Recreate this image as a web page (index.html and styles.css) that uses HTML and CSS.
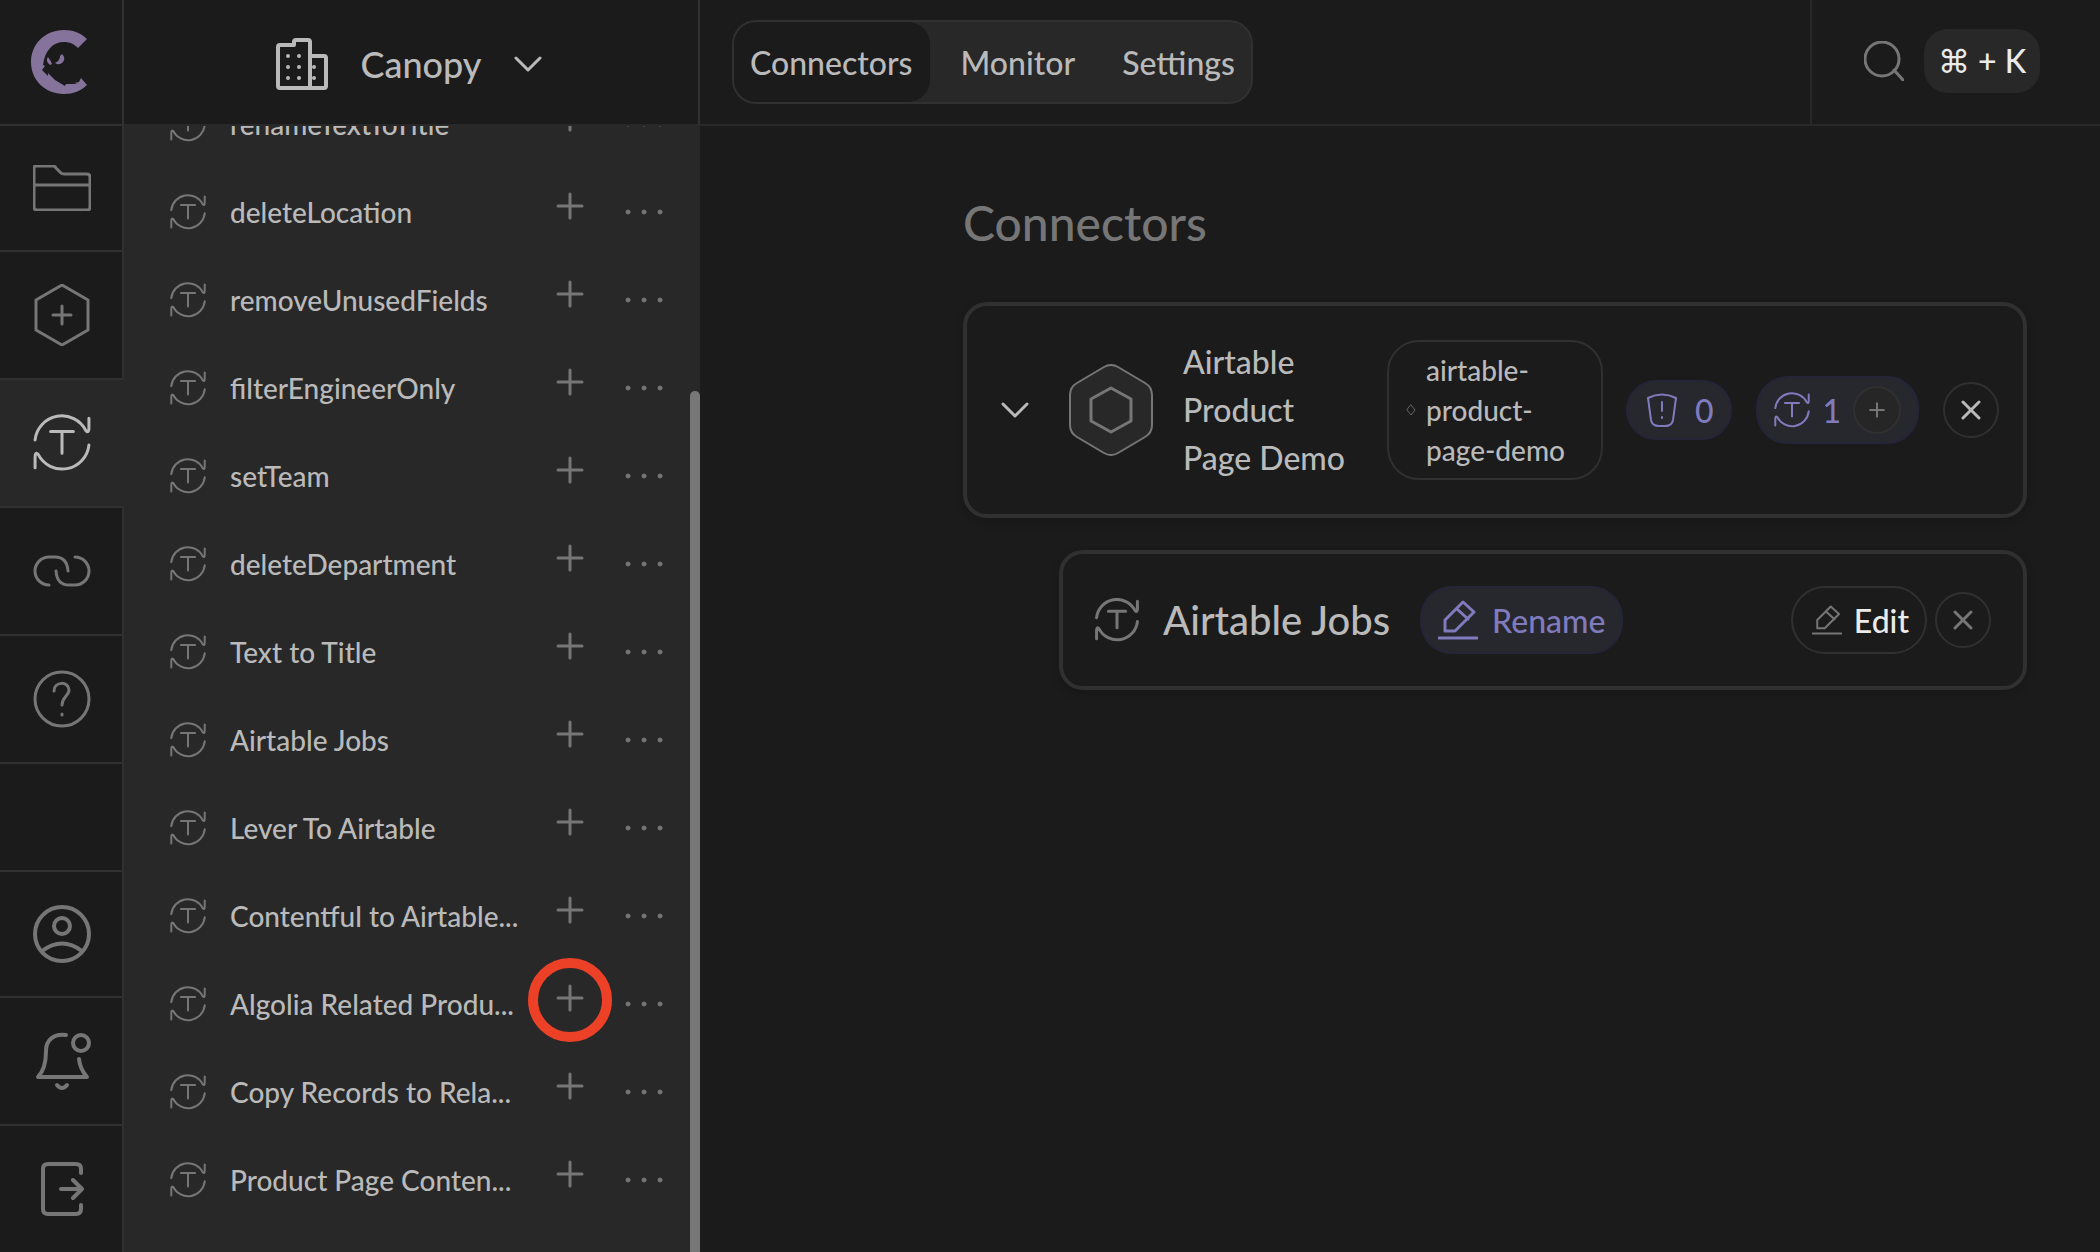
FILE: index.html
```html
<!DOCTYPE html>
<html lang="en">
<head>
<meta charset="utf-8">
<title>Connectors</title>
<link rel="stylesheet" href="styles.css">
</head>
<body>
<svg class="sprite" aria-hidden="true">
  <symbol id="transform" viewBox="0 0 56 56">
    <path d="M2 25A26 26 0 0 1 51 16Q54 19 54 14V4M54 30A26 26 0 0 1 5 39Q2 36 2 42V52M17 17H39M28 17V38"/>
  </symbol>
  <symbol id="plus" viewBox="0 0 28 28"><path d="M14 2V26M2 14H26"/></symbol>
  <symbol id="dots" viewBox="0 0 40 8"><circle cx="4" cy="4" r="2"/><circle cx="20" cy="4" r="2"/><circle cx="36" cy="4" r="2"/></symbol>
  <symbol id="chevron" viewBox="0 0 28 16"><path d="M2 2L14 14L26 2"/></symbol>
  <symbol id="cross" viewBox="0 0 20 20"><path d="M2 2L18 18M18 2L2 18"/></symbol>
  <symbol id="pencil" viewBox="0 0 40 40"><path d="M7 31V20L25 2L36 12L17 31ZM19 9L30 19M1 38H39"/></symbol>
</svg>
<div class="app">
  <aside class="rail">
    <a class="logo" href="#" aria-label="Home">
      <svg width="56" height="64" viewBox="0 0 56 64"><path class="solid" d="M56 9C50 3 42 0 33 0C14 0 0 14 0 32S14 64 33 64C42 64 50 61 56 55L50 48L48 52L43 53L47 54L35 54L34 56L24 50L17 43V46L11 40L14 36L12 35C14 20 22 12 33 12C39 12 43 14 47 18ZM17 27Q20 31 21 34L19 35Q14 31 17 27ZM31 24Q35 28 32 32Q28 36 24 33Q29 31 29 26Z"/></svg>
    </a>
    <nav class="rail-nav" aria-label="Main">
      <a class="rail-item" href="#" aria-label="Files"><svg width="58" height="46" viewBox="0 0 58 46"><path d="M1 3Q1 1 3 1H20Q22 1 23 3L28 8Q29 9 31 9H54Q57 9 57 12V42Q57 45 54 45H4Q1 45 1 42ZM1 20H57"/></svg></a>
      <a class="rail-item" href="#" aria-label="Add connector"><svg width="56" height="62" viewBox="0 0 56 62"><path d="M28 1L54 16V46L28 61L2 46V16ZM28 22V40M19 31H37"/></svg></a>
      <a class="rail-item active" href="#" aria-label="Transforms"><svg width="58" height="58"><use href="#transform"/></svg></a>
      <a class="rail-item" href="#" aria-label="Links"><svg width="58" height="32" viewBox="0 0 58 32"><path d="M16 30A14 14 0 0 1 16 2H22Q34 2 35 16M42 2A14 14 0 0 1 42 30H36Q24 30 23 16"/></svg></a>
      <a class="rail-item" href="#" aria-label="Help"><svg width="58" height="58" viewBox="0 0 58 58"><circle cx="29" cy="29" r="27"/><path d="M21 21C21 11 36 11 36 20C36 26 29 27 29 35M29 44V45"/></svg></a>
    </nav>
    <nav class="rail-nav" aria-label="Account">
      <a class="rail-item bold" href="#" aria-label="Profile"><svg width="58" height="58" viewBox="0 0 58 58"><circle cx="29" cy="29" r="27"/><circle cx="29" cy="21" r="8"/><path d="M9 46Q29 31 49 46"/></svg></a>
      <a class="rail-item bold" href="#" aria-label="Notifications"><svg width="58" height="60" viewBox="0 0 58 60"><circle cx="48" cy="12" r="8"/><path d="M33 4C21 2 13 9 13 20Q13 38 5 46H54Q47 38 46 28M24 54Q29 60 34 54"/></svg></a>
      <a class="rail-item bold" href="#" aria-label="Log out"><svg width="44" height="54" viewBox="0 0 44 54"><path d="M41 11V7Q41 2 36 2H8Q3 2 3 7V47Q3 52 8 52H36Q41 52 41 47V43M21 27H42M33 18L42 27L33 36"/></svg></a>
    </nav>
  </aside>

  <section class="panel">
    <button class="workspace" type="button">
      <svg class="bold" width="52" height="52" viewBox="0 0 52 52"><path d="M2 48V9Q2 7 4 7H18V4Q18 2 20 2H32Q34 2 34 4V50H4Q2 50 2 48ZM34 18H48Q50 18 50 20V48Q50 50 48 50H34M12 18v0M23 18v0M12 29v0M23 29v0M12 40v0M23 40v0M38 29v0M38 40v0"/></svg>
      <span>Canopy</span>
      <svg class="thick" width="28" height="16"><use href="#chevron"/></svg>
    </button>
    <div class="scroller">
      <ul class="list">
        <li class="row"><svg class="row-icon"><use href="#transform"/></svg><span class="name">renameTextToTitle</span><button class="add" type="button" aria-label="Add"><svg><use href="#plus"/></svg></button><button class="more" type="button" aria-label="More"><svg><use href="#dots"/></svg></button></li>
        <li class="row"><svg class="row-icon"><use href="#transform"/></svg><span class="name">deleteLocation</span><button class="add" type="button" aria-label="Add"><svg><use href="#plus"/></svg></button><button class="more" type="button" aria-label="More"><svg><use href="#dots"/></svg></button></li>
        <li class="row"><svg class="row-icon"><use href="#transform"/></svg><span class="name">removeUnusedFields</span><button class="add" type="button" aria-label="Add"><svg><use href="#plus"/></svg></button><button class="more" type="button" aria-label="More"><svg><use href="#dots"/></svg></button></li>
        <li class="row"><svg class="row-icon"><use href="#transform"/></svg><span class="name">filterEngineerOnly</span><button class="add" type="button" aria-label="Add"><svg><use href="#plus"/></svg></button><button class="more" type="button" aria-label="More"><svg><use href="#dots"/></svg></button></li>
        <li class="row"><svg class="row-icon"><use href="#transform"/></svg><span class="name">setTeam</span><button class="add" type="button" aria-label="Add"><svg><use href="#plus"/></svg></button><button class="more" type="button" aria-label="More"><svg><use href="#dots"/></svg></button></li>
        <li class="row"><svg class="row-icon"><use href="#transform"/></svg><span class="name">deleteDepartment</span><button class="add" type="button" aria-label="Add"><svg><use href="#plus"/></svg></button><button class="more" type="button" aria-label="More"><svg><use href="#dots"/></svg></button></li>
        <li class="row"><svg class="row-icon"><use href="#transform"/></svg><span class="name">Text to Title</span><button class="add" type="button" aria-label="Add"><svg><use href="#plus"/></svg></button><button class="more" type="button" aria-label="More"><svg><use href="#dots"/></svg></button></li>
        <li class="row"><svg class="row-icon"><use href="#transform"/></svg><span class="name">Airtable Jobs</span><button class="add" type="button" aria-label="Add"><svg><use href="#plus"/></svg></button><button class="more" type="button" aria-label="More"><svg><use href="#dots"/></svg></button></li>
        <li class="row"><svg class="row-icon"><use href="#transform"/></svg><span class="name">Lever To Airtable</span><button class="add" type="button" aria-label="Add"><svg><use href="#plus"/></svg></button><button class="more" type="button" aria-label="More"><svg><use href="#dots"/></svg></button></li>
        <li class="row"><svg class="row-icon"><use href="#transform"/></svg><span class="name">Contentful to Airtable...</span><button class="add" type="button" aria-label="Add"><svg><use href="#plus"/></svg></button><button class="more" type="button" aria-label="More"><svg><use href="#dots"/></svg></button></li>
        <li class="row"><svg class="row-icon"><use href="#transform"/></svg><span class="name">Algolia Related Produ...</span><button class="add marked" type="button" aria-label="Add"><svg><use href="#plus"/></svg></button><button class="more" type="button" aria-label="More"><svg><use href="#dots"/></svg></button></li>
        <li class="row"><svg class="row-icon"><use href="#transform"/></svg><span class="name">Copy Records to Rela...</span><button class="add" type="button" aria-label="Add"><svg><use href="#plus"/></svg></button><button class="more" type="button" aria-label="More"><svg><use href="#dots"/></svg></button></li>
        <li class="row"><svg class="row-icon"><use href="#transform"/></svg><span class="name">Product Page Conten...</span><button class="add" type="button" aria-label="Add"><svg><use href="#plus"/></svg></button><button class="more" type="button" aria-label="More"><svg><use href="#dots"/></svg></button></li>
      </ul>
      <div class="thumb"></div>
    </div>
  </section>

  <div class="content">
    <header class="topbar">
      <nav class="tabs" aria-label="Sections">
        <a class="tab current" href="#">Connectors</a>
        <a class="tab" href="#">Monitor</a>
        <a class="tab" href="#">Settings</a>
      </nav>
      <div class="search">
        <button class="plain" type="button" aria-label="Search"><svg width="40" height="40" viewBox="0 0 40 40"><circle cx="18" cy="18" r="17"/><path d="M30 29L39 39"/></svg></button>
        <kbd class="keys">⌘ + K</kbd>
      </div>
    </header>
    <main class="main">
      <h1>Connectors</h1>
      <article class="card connector">
        <button class="plain toggle" type="button" aria-label="Collapse"><svg class="thick" width="28" height="16"><use href="#chevron"/></svg></button>
        <svg class="hex" width="84" height="92" viewBox="0 0 84 92"><path class="hex-fill" d="M35 3Q42 -1 49 3L76 19Q83 23 83 31V61Q83 69 76 73L49 89Q42 93 35 89L8 73Q1 69 1 61V31Q1 23 8 19Z"/><path d="M42 24L62 35V57L42 68L22 57V35Z"/></svg>
        <h2 class="title">Airtable Product Page Demo</h2>
        <div class="slug">
          <svg width="10" height="12" viewBox="0 0 10 12"><path d="M5 1L9 6L5 11L1 6Z"/></svg>
          <span>airtable-product-page-demo</span>
        </div>
        <div class="pill count"><svg width="30" height="34" viewBox="0 0 30 34"><path d="M1 5Q15 -2 29 5L26 27Q25 33 18 33H12Q5 33 4 27ZM15 9V18M15 24V25"/></svg><span>0</span></div>
        <div class="pill transforms"><svg width="36" height="36"><use href="#transform"/></svg><span>1</span><button class="round small" type="button" aria-label="Add transform"><svg width="16" height="16"><use href="#plus"/></svg></button></div>
        <button class="round bright" type="button" aria-label="Remove"><svg class="thick" width="20" height="20"><use href="#cross"/></svg></button>
      </article>
      <article class="card child">
        <svg class="child-icon" width="44" height="44"><use href="#transform"/></svg>
        <h3>Airtable Jobs</h3>
        <button class="pill rename" type="button"><svg class="thick" width="40" height="40"><use href="#pencil"/></svg><span>Rename</span></button>
        <button class="edit" type="button"><svg width="30" height="30"><use href="#pencil"/></svg><span>Edit</span></button>
        <button class="round" type="button" aria-label="Remove"><svg class="thick" width="20" height="20"><use href="#cross"/></svg></button>
      </article>
    </main>
  </div>
</div>
</body>
</html>
```
FILE: styles.css
```css
:root {
  --bg: #1b1b1b;
  --raised: #282828;
  --line: #303030;
  --muted: #767676;
  --text: #bababa;
  --bright: #ebebeb;
  --violet: #7f7bbd;
  --violet-bg: #27272e;
  --violet-line: #262439;
}
*, *::before, *::after { box-sizing: border-box; }
body {
  margin: 0;
  background: var(--bg);
  color: var(--text);
  font-family: Lato, "Noto Sans", sans-serif;
  font-size: 32px;
  font-weight: 500;
}
button {
  margin: 0;
  padding: 0;
  border: 0;
  background: none;
  color: inherit;
  font: inherit;
  cursor: pointer;
}
a { color: inherit; text-decoration: none; }
svg {
  flex: none;
  display: block;
  fill: none;
  stroke: currentColor;
  stroke-width: 2px;
  stroke-linecap: round;
  stroke-linejoin: round;
}
symbol { overflow: visible; }
symbol path { vector-effect: non-scaling-stroke; }
h1, h2, h3 { margin: 0; font-weight: 500; }
.sprite { display: none; }
.plain { color: var(--muted); }
.thick { stroke-width: 3px; }

.app {
  display: grid;
  grid-template-columns: 124px 576px 1fr;
  height: 100vh;
}

/* Icon rail */
.rail {
  display: flex;
  flex-direction: column;
  color: var(--muted);
}
.rail svg { stroke-width: 3px; }
.rail .bold svg { stroke-width: 4px; }
.logo {
  display: flex;
  align-items: center;
  height: 126px;
  padding-left: 31px;
  color: #85739b;
  border-right: 2px solid var(--line);
  border-bottom: 2px solid var(--line);
}
.logo .solid { fill: currentColor; stroke: none; }
.rail-nav { display: flex; flex-direction: column; }
.rail-nav:first-of-type { flex: 1; }
.rail-nav:first-of-type::after {
  content: "";
  flex: 1;
  border-right: 2px solid var(--line);
}
.rail-item {
  display: flex;
  align-items: center;
  justify-content: center;
  height: 128px;
  padding-left: 2px;
  border-right: 2px solid var(--line);
  border-bottom: 2px solid var(--line);
}
.rail-nav:first-of-type .rail-item:first-child,
.rail-nav:last-of-type .rail-item:last-child { height: 126px; }
.rail-nav:last-of-type .rail-item:first-child { border-top: 2px solid var(--line); }
.rail-nav:last-of-type .rail-item:last-child { border-bottom: 0; }
.rail-item.active {
  background: var(--raised);
  border-right-color: var(--raised);
  color: var(--text);
}

/* Transform list */
.panel {
  display: flex;
  flex-direction: column;
  min-height: 0;
}
.workspace {
  display: flex;
  align-items: center;
  justify-content: center;
  gap: 32px;
  height: 126px;
  padding: 4px 4px 0 0;
  font-size: 36px;
  border-right: 2px solid var(--line);
  border-bottom: 2px solid var(--raised);
}
.workspace .bold { stroke-width: 4px; }
.scroller {
  position: relative;
  flex: 1;
  display: flex;
  flex-direction: column;
  justify-content: flex-end;
  min-height: 0;
  overflow: hidden;
  background: var(--raised);
}
.list {
  margin: 0;
  padding: 0 36px 28px 46px;
  list-style: none;
}
.row {
  display: flex;
  align-items: center;
  height: 88px;
  font-size: 28px;
}
.row svg { color: var(--muted); }
.row-icon { width: 36px; height: 36px; }
.name {
  flex: 1;
  padding-left: 24px;
  white-space: nowrap;
}
.add { position: relative; padding-bottom: 12px; margin-right: 40px; }
.add svg { width: 28px; height: 28px; stroke-width: 3px; }
.more svg { width: 40px; height: 8px; fill: currentColor; stroke-width: 1px; }
.marked::after {
  content: "";
  position: absolute;
  left: -28px;
  top: -26px;
  width: 84px;
  height: 84px;
  border: 10px solid #ec4127;
  border-radius: 50%;
}
.thumb {
  position: absolute;
  right: 0;
  top: 265px;
  bottom: 0;
  width: 10px;
  background: #777777;
  border-radius: 5px 5px 0 0;
}

/* Top bar */
.content { min-width: 0; }
.topbar {
  display: flex;
  align-items: stretch;
  justify-content: space-between;
  height: 126px;
  border-bottom: 2px solid var(--raised);
}
.tabs {
  display: flex;
  align-self: center;
  height: 84px;
  margin-left: 32px;
  background: var(--raised);
  border: 2px solid var(--line);
  border-radius: 24px;
}
.tab {
  display: flex;
  align-items: center;
  padding: 0 16px 0 31px;
}
.tab.current {
  padding: 0 17px 0 16px;
  background: var(--bg);
  border-radius: 22px;
}
.search {
  display: flex;
  align-items: center;
  gap: 20px;
  padding: 0 60px 2px 52px;
  border-left: 2px solid var(--raised);
}
.search svg { stroke-width: 3px; }
.keys {
  display: flex;
  align-items: center;
  justify-content: center;
  width: 116px;
  height: 64px;
  font-family: Lato, "DejaVu Sans", sans-serif;
  color: var(--bright);
  background: var(--raised);
  border-radius: 24px;
  white-space: nowrap;
}

/* Connectors */
.main { padding: 67px 73px 0 263px; }
h1 {
  color: var(--muted);
  font-size: 48px;
  line-height: 60px;
  margin-bottom: 49px;
}
.card {
  display: flex;
  align-items: center;
  border: 4px solid var(--line);
  border-radius: 24px;
  box-shadow: 0 4px 8px #00000026;
}
.connector {
  height: 216px;
  padding: 0 24px 0 34px;
}
.toggle { color: var(--text); margin-right: 40px; }
.hex .hex-fill { fill: var(--raised); stroke-width: 2px; }
.hex { color: var(--muted); stroke-width: 3px; margin-right: 30px; }
.title {
  flex: 1;
  max-width: 204px;
  padding-right: 32px;
  font-size: 32px;
  line-height: 48px;
}
.slug {
  display: flex;
  align-items: center;
  gap: 10px;
  width: 216px;
  margin-right: auto;
  padding: 8px 24px 8px 17px;
  font-size: 28px;
  line-height: 40px;
  border: 2px solid var(--line);
  border-radius: 32px;
}
.slug svg { color: #666666; stroke-width: 1px; }
.pill {
  display: flex;
  align-items: center;
  color: var(--violet);
  background: var(--violet-bg);
  border: 2px solid var(--violet-line);
  border-radius: 32px;
}
.count { height: 60px; gap: 18px; padding: 0 17px 0 19px; margin-right: 24px; }
.transforms { height: 68px; gap: 12px; padding: 0 16px; margin-right: 24px; }
.round {
  display: flex;
  align-items: center;
  justify-content: center;
  flex: none;
  width: 56px;
  height: 56px;
  color: var(--muted);
  border: 2px solid var(--line);
  border-radius: 50%;
}
.round.bright { color: var(--text); }
.round.small { width: 48px; height: 48px; background: #262626; }

.child {
  height: 140px;
  margin: 32px 0 0 96px;
  padding: 0 32px;
}
.child-icon { color: var(--muted); stroke-width: 3px; margin-right: 24px; }
h3 { font-size: 40px; line-height: 48px; margin-right: 30px; }
.rename { height: 68px; gap: 14px; padding: 0 16px; }
.edit {
  display: flex;
  align-items: center;
  gap: 12px;
  height: 68px;
  margin: 0 8px 0 auto;
  padding: 0 16px 0 19px;
  color: var(--bright);
  border: 2px solid var(--line);
  border-radius: 34px;
}
.edit svg { color: var(--muted); }
```
